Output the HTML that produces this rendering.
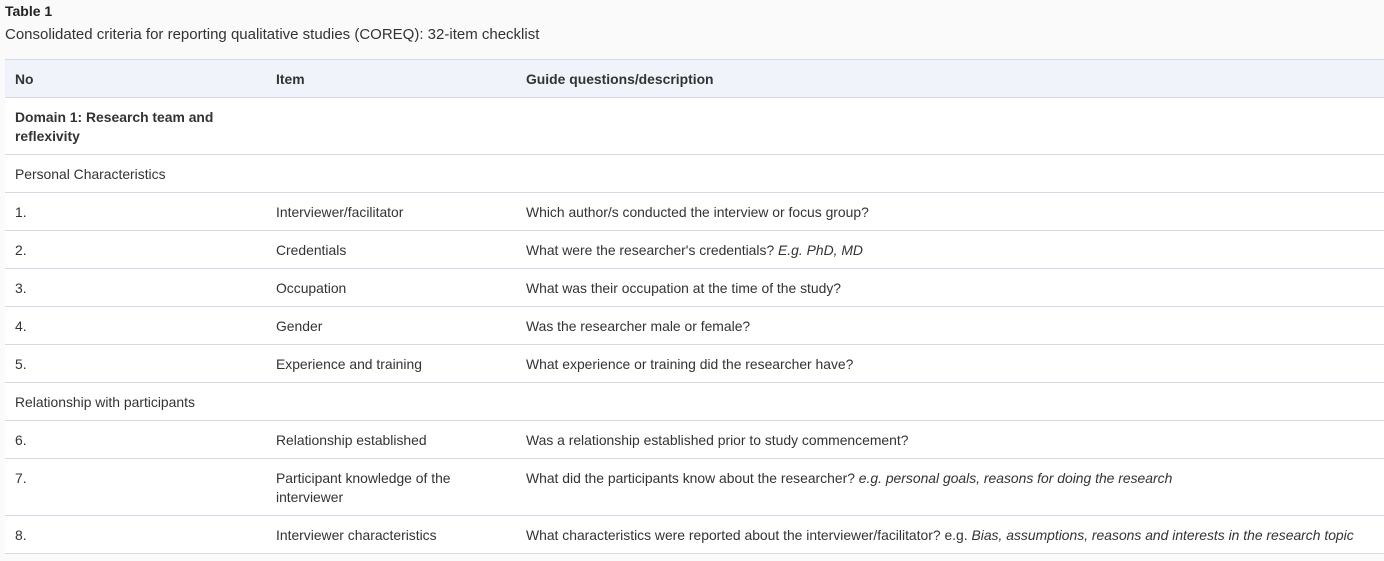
<!DOCTYPE html>
<html><head><meta charset="utf-8"><style>
html,body{margin:0;padding:0;background:#fafafa;width:1384px;height:561px;overflow:hidden;font-family:"Liberation Sans",sans-serif;color:#333;font-size:13.9px}
.t1{position:absolute;left:5px;top:3px;font-weight:bold;font-size:14px;color:#222}
.cap{position:absolute;left:5px;top:26px;font-size:15px;color:#333}
table{position:absolute;left:5px;top:59px;width:1379px;border-collapse:collapse;background:#fff;table-layout:fixed}
td,th{text-align:left;vertical-align:top;padding:0 10px;line-height:19px;border-top:1px solid #d5dae6;white-space:nowrap;overflow:visible}
th{background:#f0f3f9;font-weight:bold;height:36px;vertical-align:middle;padding-top:1px}
td{height:38px;padding-top:10px;box-sizing:border-box}
tr:last-child td{border-bottom:1px solid #d5dae6}
i{font-style:italic}
</style></head><body>
<div class="t1">Table 1</div>
<div class="cap">Consolidated criteria for reporting qualitative studies (COREQ): 32-item checklist</div>
<table>
<colgroup><col style="width:261px"><col style="width:250px"><col></colgroup>
<tr><th>No</th><th>Item</th><th>Guide questions/description</th></tr>
<tr><td style="height:57px;font-weight:bold">Domain 1: Research team and<br>reflexivity</td><td></td><td></td></tr>
<tr><td>Personal Characteristics</td><td></td><td></td></tr>
<tr><td>1.</td><td>Interviewer/facilitator</td><td>Which author/s conducted the interview or focus group?</td></tr>
<tr><td>2.</td><td>Credentials</td><td>What were the researcher's credentials? <i>E.g. PhD, MD</i></td></tr>
<tr><td>3.</td><td>Occupation</td><td>What was their occupation at the time of the study?</td></tr>
<tr><td>4.</td><td>Gender</td><td>Was the researcher male or female?</td></tr>
<tr><td>5.</td><td>Experience and training</td><td>What experience or training did the researcher have?</td></tr>
<tr><td>Relationship with participants</td><td></td><td></td></tr>
<tr><td>6.</td><td>Relationship established</td><td>Was a relationship established prior to study commencement?</td></tr>
<tr><td style="height:57px">7.</td><td>Participant knowledge of the<br>interviewer</td><td>What did the participants know about the researcher? <i>e.g. personal goals, reasons for doing the research</i></td></tr>
<tr><td>8.</td><td>Interviewer characteristics</td><td>What characteristics were reported about the interviewer/facilitator? e.g. <i>Bias, assumptions, reasons and interests in the research topic</i></td></tr>
</table>
</body></html>
